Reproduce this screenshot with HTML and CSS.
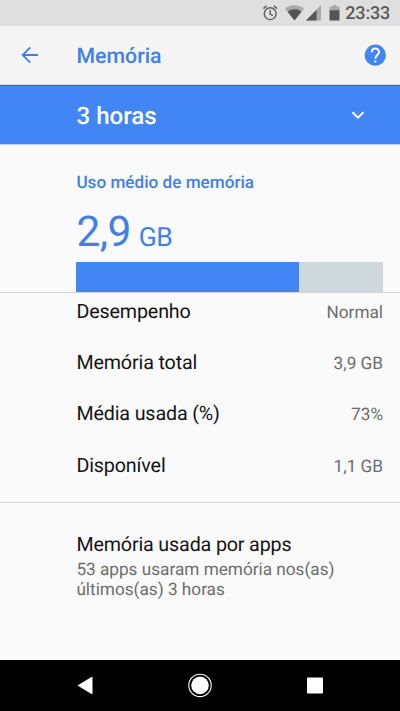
FILE: index.html
```html
<!DOCTYPE html>
<html lang="pt-BR">
<head>
<meta charset="utf-8">
<title>Memória</title>
<link rel="stylesheet" href="styles.css">
</head>
<body>
<div class="screen">
  <div class="status">
    <svg class="status-icons" width="82" height="26" viewBox="0 0 82 26">
      <g fill="none" stroke="#5e5e5e" stroke-width="1.400">
        <circle cx="10.200" cy="13.700" r="5.900"/>
        <path d="M10.200 10v4l2.700 1.600M3.400 8.600l3.100-2.700M17 8.600l-3.100-2.700"/>
      </g>
      <path fill="#a9a9a9" d="M25 8.700C30 4 39 4 44 8.700L34.500 20.500z"/>
      <path fill="#555" d="M27.600 11.700c4-3.300 9.800-3.300 13.800 0L34.500 20.500z"/>
      <path fill="#a9a9a9" d="M61 5v15.500H46z"/>
      <path fill="#555" d="M56.500 9.700v10.800H46z"/>
      <path fill="#a9a9a9" d="M69.500 10.500V6.700h3V5h4v1.700h3v3.800z"/>
      <path fill="#555" d="M69.500 10.200h10v10.300h-10z"/>
    </svg>
    <span class="clock">23:33</span>
  </div>
  <header class="appbar">
    <svg class="back" width="18" height="18" viewBox="0 0 18 18"><path fill="none" stroke="#4280e5" stroke-width="1.800" d="M17 9H2M9.300 1.300L1.600 9l7.700 7.700"/></svg>
    <h1 class="title">Memória</h1>
    <svg class="help" width="22" height="22" viewBox="0 0 22 22"><circle cx="11.300" cy="11.200" r="10.600" fill="#4285f4"/><path fill="none" stroke="#fff" stroke-width="2" d="M7.700 8.200C7.700 3.400 15 3.400 15 8C15 11 11.300 11 11.300 14.800"/><path fill="#fff" d="M10.300 16.500h2v2h-2z"/></svg>
  </header>
  <div class="period">
    <span>3 horas</span>
    <svg width="14" height="10" viewBox="0 0 14 10"><path fill="none" stroke="#fff" stroke-width="2" d="M1.500 1.200L7 6.700L12.500 1.200"/></svg>
  </div>
  <section class="summary">
    <h2 class="label">Uso médio de memória</h2>
    <div class="amount"><span class="number">2,9</span><span class="unit">GB</span></div>
    <div class="bar"><div class="used"></div></div>
  </section>
  <section class="stats">
    <div class="row"><span>Desempenho</span><span class="value">Normal</span></div>
    <div class="row"><span>Memória total</span><span class="value">3,9 GB</span></div>
    <div class="row"><span>Média usada (%)</span><span class="value">73%</span></div>
    <div class="row"><span>Disponível</span><span class="value">1,1 GB</span></div>
  </section>
  <section class="apps">
    <div class="apps-title">Memória usada por apps</div>
    <div class="apps-text">53 apps usaram memória nos(as)<br>últimos(as) 3 horas</div>
  </section>
  <nav class="nav">
    <svg width="400" height="51" viewBox="0 0 400 51" fill="#fff">
      <path d="M77.500 25.500L91.500 17q1-.5 1 .5v16q0 1-1 .5z"/>
      <circle cx="200" cy="25.400" r="8.800"/>
      <circle cx="200" cy="25.400" r="11.200" fill="none" stroke="#fff" stroke-width="1.100"/>
      <rect x="307" y="17.500" width="16" height="16" rx=".8"/>
    </svg>
  </nav>
</div>
</body>
</html>
```
FILE: styles.css
```css
* { box-sizing: border-box; }
body { margin: 0; font-family: Roboto, sans-serif; text-rendering: geometricPrecision; }
h1, h2 { margin: 0; font-weight: 500; }
svg { display: block; flex: none; }

.screen {
  width: 400px;
  height: 711px;
  display: flex;
  flex-direction: column;
  background: #fafafa;
  color: #151515;
  overflow: hidden;
}

.status {
  height: 26px;
  flex: none;
  display: flex;
  align-items: center;
  justify-content: flex-end;
  background: #dfdfdf;
  padding-right: 10px;
}
.clock {
  width: 48px;
  text-align: right;
  white-space: nowrap;
  font-size: 18px;
  letter-spacing: -.2px;
  font-weight: 500;
  line-height: 26px;
  padding-top: 2px;
  color: #5a5a5a;
}

.appbar {
  height: 59px;
  flex: none;
  display: flex;
  align-items: center;
  padding: 0 14.500px 0 21px;
  background: #f5f5f5;
  border-bottom: 1px solid #d8dde0;
}
.title {
  flex: 1;
  margin-left: 37.500px;
  padding-top: 3px;
  font-size: 21.300px;
  line-height: 28px;
  color: #4280e5;
}

.period {
  height: 60px;
  flex: none;
  display: flex;
  align-items: center;
  justify-content: space-between;
  padding: 2px 35px 0 76.500px;
  background: #4285f4;
  border-top: 1px solid #33709c;
  border-bottom: 1px solid #b9d3fa;
  color: #fff;
  font-size: 24.100px;
  font-weight: 500;
}

.summary {
  height: 148px;
  flex: none;
  padding: 28px 17px 0 76.400px;
  color: #4280e5;
  border-bottom: 1px solid #d5d5d5;
}
.label { font-size: 17.150px; line-height: 20px; }
.amount {
  display: flex;
  align-items: baseline;
  height: 69.400px;
  line-height: 79px;
}
.number { font-size: 42.500px; letter-spacing: -.6px; }
.unit { font-size: 26.500px; margin-left: 8px; letter-spacing: -.5px; }
.bar { height: 29.600px; background: #cfd8dc; }
.used { width: 72.700%; height: 100%; background: #4285f4; }

.stats {
  height: 210px;
  flex: none;
  padding: 0 17px 0 76.400px;
  border-bottom: 1px solid #d5d5d5;
}
.row {
  height: 51.200px;
  display: flex;
  align-items: baseline;
  justify-content: space-between;
  line-height: 37px;
  font-size: 19.700px;
  letter-spacing: -.14px;
}
.value { font-size: 17.200px; letter-spacing: 0; color: #6d6d6d; }

.apps { flex: 1; padding: 30px 17px 0 76.400px; }
.apps-title { font-size: 19.700px; letter-spacing: -.15px; line-height: 24px; }
.apps-text { margin-top: 3px; font-size: 17.200px; line-height: 20px; color: #6d6d6d; }

.nav { height: 51px; flex: none; background: #000; }
```
